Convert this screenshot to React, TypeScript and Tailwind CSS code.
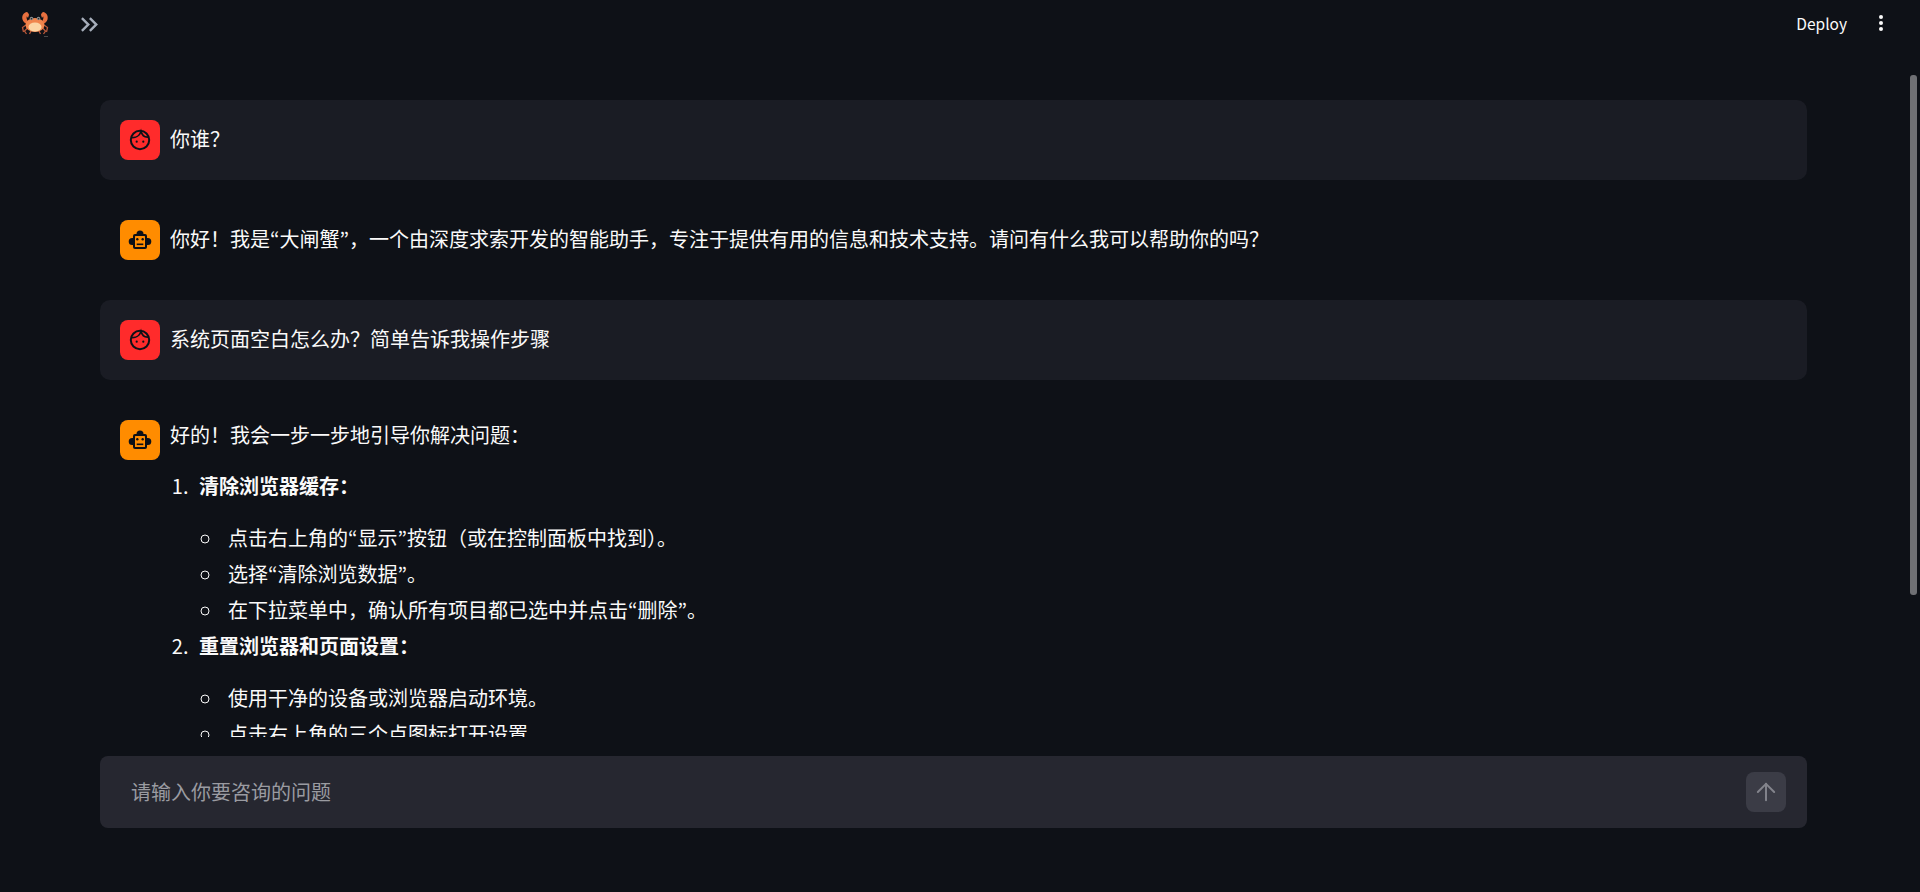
import { ArrowUp } from "lucide-react";

const INK = "#0e1117";

function CrabLogo() {
  return (
    <svg width="28" height="26" viewBox="0 0 28 26" className="overflow-visible" aria-hidden="true">
      {/* legs */}
      <path d="M5 14 1.500 16.500 2.500 21M6.500 17 3.500 20 5.500 23M23 14 26.500 16.500 25.500 21M21.500 17 24.500 20 22.500 23M10 20 8.500 23M18 20 19.500 23" fill="none" stroke="#b9583a" strokeWidth="1.300" />
      {/* claws */}
      <path d="M5.500 1C2 2 .6 5.500 1.500 8.500c.6 2 2.500 3.500 4 4.500l2-2C5.800 9 5.200 7 5.800 5.200L7 7l1-3C8 3 6.800 1 5.500 1Z" fill="#e8703f" />
      <path d="M22.500 1C26 2 27.400 5.500 26.500 8.500c-.6 2-2.500 3.500-4 4.500l-2-2c1.700-2 2.300-4 1.700-5.800L21 7l-1-3c0-1 1.200-3 2.500-3Z" fill="#e8703f" />
      {/* shell */}
      <ellipse cx="14" cy="14" rx="9.500" ry="7" fill="#f0854d" />
      <ellipse cx="14" cy="16" rx="6.500" ry="4.500" fill="#fcd5a4" />
      {/* eyes */}
      <circle cx="10.500" cy="7.500" r="1.800" fill="#8d8d8d" />
      <circle cx="17.500" cy="7.500" r="1.800" fill="#8d8d8d" />
      <circle cx="10.500" cy="7.800" r="0.800" fill="#222222" />
      <circle cx="17.500" cy="7.800" r="0.800" fill="#222222" />
      <rect x="23" y="25" width="4" height="1" fill="#4a4a4a" />
    </svg>
  );
}

function DoubleChevron() {
  return (
    <svg width="29" height="29" viewBox="0 0 24 24" fill="#a6adba" aria-hidden="true">
      <path d="M6.410 6 5 7.410 9.580 12 5 16.590 6.410 18l6-6zM13 6l-1.410 1.410L16.170 12l-4.580 4.590L13 18l6-6z" />
    </svg>
  );
}

function UserFace() {
  return (
    <svg width="24" height="24" viewBox="0 0 24 24" fill="none" aria-hidden="true">
      <circle cx="12" cy="12" r="9.200" stroke={INK} strokeWidth="2" />
      <path d="M3.500 9.500c4 .5 8-1.500 9.500-6 1 3.500 3.500 6 7.500 5.500" stroke={INK} strokeWidth="1.700" />
      <circle cx="8.700" cy="13.700" r="1.100" fill={INK} />
      <circle cx="15.300" cy="13.700" r="1.100" fill={INK} />
    </svg>
  );
}

function BotFace() {
  return (
    <svg width="24" height="24" viewBox="0 0 24 24" aria-hidden="true">
      <path d="M8.500 6a3.500 3.500 0 0 1 7 0Z" fill={INK} />
      <path d="M.7 13.500a3.500 3.500 0 0 1 3.500-3.500H6v7H4.200a3.500 3.500 0 0 1-3.500-3.500ZM23.300 13.500a3.500 3.500 0 0 0-3.500-3.500H18v7h1.800a3.500 3.500 0 0 0 3.500-3.500Z" fill={INK} />
      <rect x="5" y="6" width="14" height="15" rx="2" fill={INK} />
      <rect x="7" y="8" width="10" height="11" rx="0.500" fill="#ff8c00" />
      <circle cx="9.300" cy="11.300" r="1.200" fill={INK} />
      <circle cx="14.700" cy="11.300" r="1.200" fill={INK} />
      <rect x="8.700" y="15.500" width="6.600" height="1.600" fill={INK} />
    </svg>
  );
}

function Avatar({ role }: { role: "user" | "bot" }) {
  return (
    <div className={`flex h-10 w-10 shrink-0 items-center justify-center rounded-lg ${role === "user" ? "bg-[#ff2b2b]" : "bg-[#ff8c00]"}`}>
      {role === "user" ? <UserFace /> : <BotFace />}
    </div>
  );
}

// Curly quotes are narrow in the reference; the KR cut of the font has proportional ones.
function Quoted({ children }: { children: string }) {
  return (
    <>
      <span className="font-['Noto_Sans_CJK_KR']">“</span>
      {children}
      <span className="font-['Noto_Sans_CJK_KR']">”</span>
    </>
  );
}

function UserMessage({ text }: { text: string }) {
  return (
    <div className="flex h-20 shrink-0 gap-[10px] rounded-[10px] bg-[#1a1c24] p-5">
      <Avatar role="user" />
      <p className="pt-px text-[20px] leading-[36px]">{text}</p>
    </div>
  );
}

export default function App() {
  return (
    <div className="relative flex h-[892px] flex-col overflow-hidden bg-[#0e1117] font-['Noto_Sans_CJK_SC',sans-serif] text-[#fafafa]">
      {/* Top bar */}
      <header className="flex h-12 shrink-0 items-center justify-between pl-[21px] pr-[37px]">
        <div className="flex items-center gap-[26px]">
          <CrabLogo />
          <DoubleChevron />
        </div>
        <div className="flex items-center gap-[32px]">
          <span className="text-[15.5px]">Deploy</span>
          <div className="-mt-[2px] flex flex-col gap-[2px]">
            <span className="h-1 w-1 rounded-full bg-[#fafafa]" />
            <span className="h-1 w-1 rounded-full bg-[#fafafa]" />
            <span className="h-1 w-1 rounded-full bg-[#fafafa]" />
          </div>
        </div>
      </header>

      {/* Chat history */}
      <main className="ml-[100px] mr-[113px] mt-[52px] flex h-[637px] shrink-0 flex-col gap-5 overflow-hidden">
        <UserMessage text={"你谁\uFF1F"} />
        <div className="flex h-20 shrink-0 gap-[10px] p-5">
          <Avatar role="bot" />
          <p className="pt-px text-[20px] leading-[36px]">
            {"你好\uFF01我是"}
            <Quoted>大闸蟹</Quoted>
            {"\uFF0C一个由深度求索开发的智能助手\uFF0C专注于提供有用的信息和技术支持。请问有什么我可以帮助你的吗\uFF1F"}
          </p>
        </div>
        <UserMessage text={"系统页面空白怎么办\uFF1F简单告诉我操作步骤"} />
        <div className="flex gap-[10px] px-5 pt-5">
          <Avatar role="bot" />
          <div className="text-[20px] leading-[36px]">
            <p className="-mt-px mb-[17px] leading-[32px]">{"好的\uFF01我会一步一步地引导你解决问题\uFF1A"}</p>
            <ol className="ml-[23px] list-decimal">
              <li className="pl-[6px]">
                <p className="mb-4 font-bold">{"清除浏览器缓存\uFF1A"}</p>
                <ul className="list-[circle] pl-[24px]">
                  <li className="pl-[5px]">
                    点击右上角的<Quoted>显示</Quoted>{"按钮\uFF08或在控制面板中找到\uFF09。"}
                  </li>
                  <li className="pl-[5px]">
                    选择<Quoted>清除浏览数据</Quoted>。
                  </li>
                  <li className="pl-[5px]">
                    {"在下拉菜单中\uFF0C确认所有项目都已选中并点击"}<Quoted>删除</Quoted>。
                  </li>
                </ul>
              </li>
              <li className="pl-[6px]">
                <p className="mb-4 font-bold">{"重置浏览器和页面设置\uFF1A"}</p>
                <ul className="list-[circle] pl-[24px]">
                  <li className="pl-[5px]">使用干净的设备或浏览器启动环境。</li>
                  <li className="pl-[5px]">点击右上角的三个点图标打开设置。</li>
                </ul>
              </li>
            </ol>
          </div>
        </div>
      </main>

      {/* Chat input */}
      <div className="ml-[100px] mr-[113px] mt-[19px] flex h-[72px] shrink-0 items-center justify-between rounded-lg bg-[#262730] pl-[31px] pr-[21px]">
        <span className="text-[20px] text-[#9a9ba1]">请输入你要咨询的问题</span>
        <button type="button" className="flex h-10 w-10 items-center justify-center rounded-lg bg-[#3b3c46]">
          <ArrowUp size={28} strokeWidth={1.7} className="text-[#83848c]" />
        </button>
      </div>

      {/* Scrollbar thumb, overlaid on the page edge */}
      <div className="absolute right-[3px] top-[75px] h-[520px] w-[7px] rounded-[3px] bg-[#6f7074]" />
    </div>
  );
}
